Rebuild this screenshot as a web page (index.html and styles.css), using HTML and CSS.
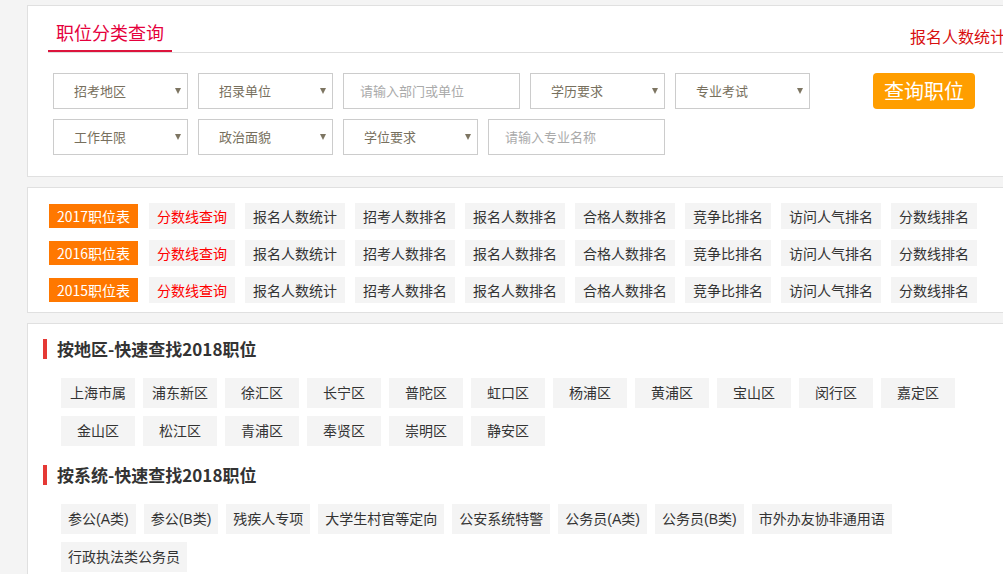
FILE: index.html
```html
<!DOCTYPE html>
<html lang="zh-CN">
<head>
<meta charset="utf-8">
<title>职位分类查询</title>
<link rel="stylesheet" href="styles.css">
</head>
<body>
<div class="page">
  <div class="panel search">
    <div class="search-head">
      <span class="tab">职位分类查询</span>
      <a class="head-link" href="#">报名人数统计</a>
    </div>
    <div class="form">
      <div class="form-row">
        <div class="sel">招考地区</div>
        <div class="sel">招录单位</div>
        <div class="inp">请输入部门或单位</div>
        <div class="sel">学历要求</div>
        <div class="sel">专业考试</div>
        <button class="btn">查询职位</button>
      </div>
      <div class="form-row">
        <div class="sel">工作年限</div>
        <div class="sel">政治面貌</div>
        <div class="sel">学位要求</div>
        <div class="inp">请输入专业名称</div>
      </div>
    </div>
  </div>

  <div class="panel years">
    <div class="year-row">
      <span class="year">2017职位表</span>
      <a class="ytag red" href="#">分数线查询</a>
      <a class="ytag" href="#">报名人数统计</a>
      <a class="ytag" href="#">招考人数排名</a>
      <a class="ytag" href="#">报名人数排名</a>
      <a class="ytag" href="#">合格人数排名</a>
      <a class="ytag" href="#">竞争比排名</a>
      <a class="ytag" href="#">访问人气排名</a>
      <a class="ytag" href="#">分数线排名</a>
    </div>
    <div class="year-row">
      <span class="year">2016职位表</span>
      <a class="ytag red" href="#">分数线查询</a>
      <a class="ytag" href="#">报名人数统计</a>
      <a class="ytag" href="#">招考人数排名</a>
      <a class="ytag" href="#">报名人数排名</a>
      <a class="ytag" href="#">合格人数排名</a>
      <a class="ytag" href="#">竞争比排名</a>
      <a class="ytag" href="#">访问人气排名</a>
      <a class="ytag" href="#">分数线排名</a>
    </div>
    <div class="year-row">
      <span class="year">2015职位表</span>
      <a class="ytag red" href="#">分数线查询</a>
      <a class="ytag" href="#">报名人数统计</a>
      <a class="ytag" href="#">招考人数排名</a>
      <a class="ytag" href="#">报名人数排名</a>
      <a class="ytag" href="#">合格人数排名</a>
      <a class="ytag" href="#">竞争比排名</a>
      <a class="ytag" href="#">访问人气排名</a>
      <a class="ytag" href="#">分数线排名</a>
    </div>
  </div>

  <div class="panel quick">
    <h3 class="qhead">按地区-快速查找2018职位</h3>
    <div class="qtags">
      <a class="qtag area" href="#">上海市属</a>
      <a class="qtag area" href="#">浦东新区</a>
      <a class="qtag area" href="#">徐汇区</a>
      <a class="qtag area" href="#">长宁区</a>
      <a class="qtag area" href="#">普陀区</a>
      <a class="qtag area" href="#">虹口区</a>
      <a class="qtag area" href="#">杨浦区</a>
      <a class="qtag area" href="#">黄浦区</a>
      <a class="qtag area" href="#">宝山区</a>
      <a class="qtag area" href="#">闵行区</a>
      <a class="qtag area" href="#">嘉定区</a>
      <a class="qtag area" href="#">金山区</a>
      <a class="qtag area" href="#">松江区</a>
      <a class="qtag area" href="#">青浦区</a>
      <a class="qtag area" href="#">奉贤区</a>
      <a class="qtag area" href="#">崇明区</a>
      <a class="qtag area" href="#">静安区</a>
    </div>
    <h3 class="qhead">按系统-快速查找2018职位</h3>
    <div class="qtags">
      <a class="qtag" href="#">参公(A类)</a>
      <a class="qtag" href="#">参公(B类)</a>
      <a class="qtag" href="#">残疾人专项</a>
      <a class="qtag" href="#">大学生村官等定向</a>
      <a class="qtag" href="#">公安系统特警</a>
      <a class="qtag" href="#">公务员(A类)</a>
      <a class="qtag" href="#">公务员(B类)</a>
      <a class="qtag" href="#">市外办友协非通用语</a>
      <a class="qtag" href="#">行政执法类公务员</a>
    </div>
  </div>
</div>
</body>
</html>
```
FILE: styles.css
```css
html, body {
  margin: 0;
  padding: 0;
  overflow: hidden;
  background: #f4f4f4;
}

body {
  font-family: "Noto Sans CJK SC", "Microsoft YaHei", "Liberation Sans", sans-serif;
  color: #333;
}

a {
  text-decoration: none;
}

.page {
  width: 1000px;
  padding: 5px 0 0 27px;
}

.panel {
  background: #fff;
  border: 1px solid #e0e0e0;
  margin-bottom: 10px;
}

/* ---------- search panel ---------- */
.search {
  padding-bottom: 21px;
}

.search-head {
  display: flex;
  justify-content: space-between;
  align-items: flex-end;
  margin: 0 20px;
  padding-top: 14px;
  border-bottom: 1px solid #dedede;
}

.tab {
  display: block;
  padding: 0 8px 6px;
  font-size: 18px;
  line-height: 24px;
  color: #e5003c;
  border-bottom: 2px solid #dc143c;
}

.head-link {
  display: block;
  font-size: 16px;
  line-height: 24px;
  padding-bottom: 4px;
  color: #d80f0f;
}

.form {
  margin-top: 20px;
  padding-left: 25px;
  display: flex;
  flex-direction: column;
  gap: 10px;
}

.form-row {
  display: flex;
  gap: 10px;
}

.sel,
.inp {
  box-sizing: border-box;
  height: 36px;
  border: 1px solid #cccccc;
  font-size: 13px;
  line-height: 34px;
}

.sel {
  position: relative;
  width: 135px;
  padding-left: 20px;
  color: #776f5d;
}

.sel::after {
  content: "";
  position: absolute;
  right: 6px;
  top: 14px;
  border-left: 3px solid transparent;
  border-right: 3px solid transparent;
  border-top: 6px solid #7d7562;
}

.inp {
  width: 177px;
  padding-left: 16px;
  color: #aaaaaa;
}

.btn {
  margin-left: 53px;
  width: 102px;
  height: 36px;
  border: 0;
  border-radius: 4px;
  background: #ff9e00;
  color: #fff;
  font-family: inherit;
  font-size: 20px;
  line-height: 36px;
  padding: 0;
}

/* ---------- years panel ---------- */
.years {
  padding: 15px 0 9px 21px;
  display: flex;
  flex-direction: column;
  gap: 11px;
}

.year-row {
  display: flex;
  align-items: center;
  gap: 10px;
}

.year {
  display: block;
  height: 24px;
  line-height: 24px;
  padding: 0 8px;
  margin-right: 1px;
  background: #ff7800;
  color: #fff;
  font-size: 14px;
}

.ytag {
  display: block;
  height: 26px;
  line-height: 26px;
  padding: 0 8px;
  background: #f4f4f4;
  color: #333;
  font-size: 14px;
}

.ytag.red {
  color: #ff0000;
}

/* ---------- quick panel ---------- */
.quick {
  padding: 15px 0 20px 15px;
}

.qhead {
  margin: 0 0 19px;
  height: 20px;
  line-height: 20px;
  border-left: 4px solid #e53935;
  padding-left: 10px;
  font-size: 17px;
  font-weight: bold;
  color: #333;
}

.qtags {
  display: flex;
  flex-wrap: wrap;
  gap: 8px;
  max-width: 900px;
  margin: 0 0 19px 18px;
}

.qtag {
  display: block;
  height: 30px;
  line-height: 30px;
  padding: 0 7px;
  background: #f4f4f4;
  color: #333;
  font-size: 14px;
  font-family: "Liberation Sans", "Noto Sans CJK SC", sans-serif;
}

.qtag.area {
  width: 74px;
  padding: 0;
  text-align: center;
}
```
